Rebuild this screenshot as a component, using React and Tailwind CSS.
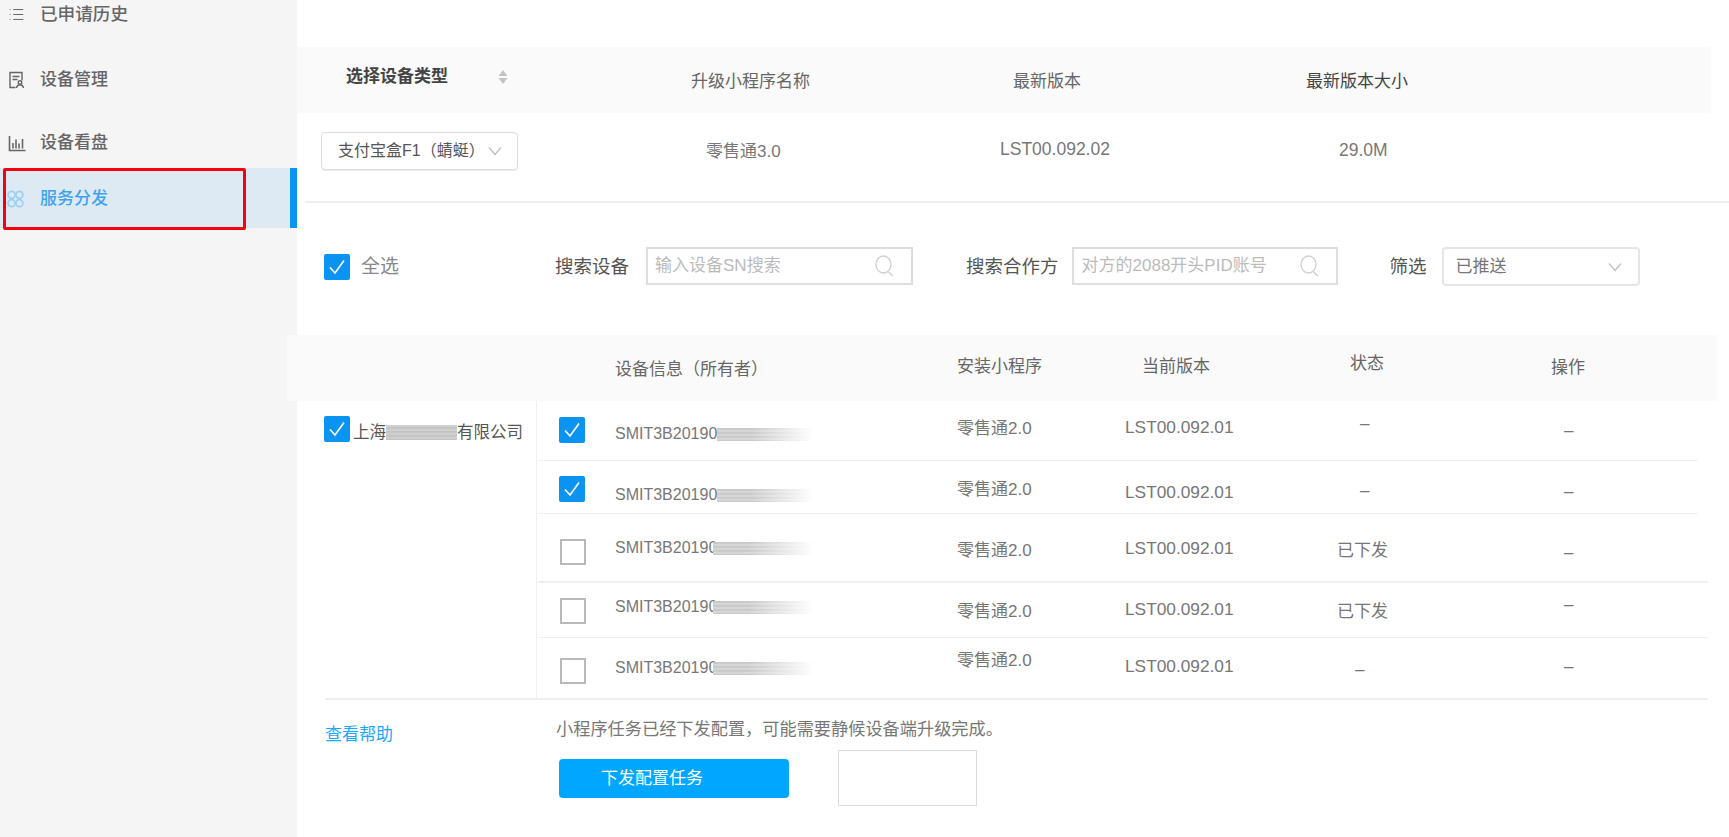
import React from "react";
import { List } from "lucide-react";

const Check = ({ on, cls = "" }) =>
  on ? (
    <span className={`flex h-[26px] w-[26px] shrink-0 items-center justify-center rounded-[2px] bg-[#0a93f0] ${cls}`}>
      <svg width="20" height="20" viewBox="0 0 20 20" fill="none" stroke="#fff" strokeWidth="1.6"><path d="M3 10.5 8 16 17 3.5" /></svg>
    </span>
  ) : (
    <span className={`block h-[26px] w-[26px] shrink-0 border-2 border-[#b9b9b9] bg-white ${cls}`} />
  );

const Chevron = ({ cls = "" }) => (
  <svg className={cls} width="14" height="10" viewBox="0 0 14 10" fill="none" stroke="#bdbdbd" strokeWidth="1.2"><path d="M1 1.5 7 8.5 13 1.5" /></svg>
);

const SearchIcon = ({ cls = "" }) => (
  <svg className={cls} width="20" height="22" viewBox="0 0 20 22" fill="none" stroke="#cfcfcf" strokeWidth="1.3">
    <ellipse cx="8.5" cy="9.5" rx="7.5" ry="8.5" />
    <path d="M13.5 17 18 21" />
  </svg>
);

const rows = [
  { h: "h-[60px] border-b border-[#efefef] mr-[10px]", on: true, c: "mt-[16px]", sn: "mt-[21px]", app: "mt-[16px]", ver: "mt-[14px]", st: "mt-[11px] pl-[23px]", status: "–", op: "mt-[18px]" },
  { h: "h-[53px] border-b border-[#efefef] mr-[10px]", on: true, c: "mt-[15px]", sn: "mt-[22px]", app: "mt-[17px]", ver: "mt-[19px]", st: "mt-[18px] pl-[23px]", status: "–", op: "mt-[19px]" },
  { h: "h-[69px] border-b-2 border-[#f0f0f0]", on: false, c: "mt-[25px]", sn: "mt-[22px]", app: "mt-[25px]", ver: "mt-[22px]", st: "mt-[25px]", status: "已下发", op: "mt-[27px]" },
  { h: "h-[55px] border-b border-[#efefef]", on: false, c: "mt-[15px]", sn: "mt-[12px]", app: "mt-[17px]", ver: "mt-[14px]", st: "mt-[17px]", status: "已下发", op: "mt-[10px]" },
  { h: "h-[61px]", on: false, c: "mt-[20px]", sn: "mt-[18px]", app: "mt-[11px]", ver: "mt-[16px]", st: "mt-[20px] pl-[18px]", status: "–", op: "mt-[17px]" },
];

function Nav({ icon, label, cls }) {
  return (
    <div className={`flex items-center pl-[8px] text-[17px] font-medium text-[#666] ${cls}`}>
      <span className="flex w-[32px] shrink-0 items-center">{icon}</span>
      <span>{label}</span>
    </div>
  );
}

export default function App() {
  return (
    <div
      className="flex h-[837px] w-[1729px] overflow-hidden bg-white text-[17px] leading-[24px] text-[#777]"
      style={{ fontFamily: '"Liberation Sans","Noto Sans CJK SC",sans-serif' }}
    >
      <aside className="w-[297px] shrink-0 bg-[#f5f5f5] leading-[24px]">
        <Nav
          cls="h-[28px]"
          label={<span className="text-[17.6px]">已申请历史</span>}
          icon={<List size={17} strokeWidth={1.4} color="#666" />}
        />
        <Nav
          cls="mt-[32px] h-[40px]"
          label="设备管理"
          icon={
            <svg width="17" height="18" viewBox="0 0 17 18" fill="none" stroke="#666" strokeWidth="1.4">
              <path d="M7.5 16.5H2V1.5h12v8" />
              <path d="M4.5 5.5h7M4.5 8.5h5" />
              <circle cx="12" cy="11.5" r="1.8" />
              <path d="M8.5 17c.3-2 1.7-3.2 3.5-3.2s3.2 1.2 3.5 3.2" />
            </svg>
          }
        />
        <Nav
          cls="mt-[23px] h-[40px]"
          label="设备看盘"
          icon={
            <svg width="18" height="17" viewBox="0 0 18 17" fill="none" stroke="#666" strokeWidth="1.6">
              <path d="M1.5 1v14.5H17.5" />
              <path d="M5 8v5.5M8 4.5v9M11 8.5v5M14.5 4v9.5" />
            </svg>
          }
        />
        <div className="relative mt-[5px] flex h-[60px] items-center bg-[#deeaf3] pl-[7px] pt-[2px] text-[17px] font-medium text-[#3ea3ef]">
          <span className="flex w-[33px] shrink-0 items-center">
            <svg width="17" height="18" viewBox="0 0 17 18" fill="none" stroke="#9ccff6" strokeWidth="1.7">
              <circle cx="4.6" cy="4.8" r="3.5" />
              <circle cx="12.4" cy="4.8" r="3.5" />
              <circle cx="4.6" cy="13.2" r="3.5" />
              <circle cx="12.4" cy="13.2" r="3.5" />
            </svg>
          </span>
          <span>服务分发</span>
          <span className="absolute right-0 top-0 h-full w-[7px] bg-[#0a93f0]" />
          <span className="absolute left-[3px] top-0 h-[62px] w-[243px] rounded-[2px] border-[3px] border-[#f5000c]" />
        </div>
      </aside>

      <main className="min-w-0 flex-1">
        {/* device type band */}
        <div className="mt-[47px] flex h-[66px] w-[1414px] items-start bg-[#fafafa] pl-[49px]">
          <div className="mt-[18px] flex w-[345px] items-center font-semibold text-[#444]">
            <span>选择设备类型</span>
            <svg className="ml-[50px]" width="10" height="16" viewBox="0 0 10 16" fill="#c4c4c4">
              <path d="M5 1 9.5 7H.5zM5 15 .5 9h9z" />
            </svg>
          </div>
          <div className="mt-[23px] w-[322px] text-[#666]">升级小程序名称</div>
          <div className="mt-[23px] w-[293px] text-[#666]">最新版本</div>
          <div className="mt-[23px] text-[#444]">最新版本大小</div>
        </div>

        {/* device type row */}
        <div className="ml-[8px] flex h-[90px] items-start border-b-2 border-[#efefef]">
          <div className="w-[401px] pl-[16px]">
            <div className="mt-[19px] flex h-[38px] w-[197px] items-center rounded-[4px] border border-[#dcdcdc] pl-[16px] text-[16px] text-[#555] shadow-[0_1px_1px_#eee]">
              <span className="whitespace-nowrap">支付宝盒F1（蜻蜓）</span>
              <Chevron cls="ml-[3px]" />
            </div>
          </div>
          <div className="mt-[27px] w-[294px]">零售通3.0</div>
          <div className="mt-[24px] w-[339px] text-[17.5px]">LST00.092.02</div>
          <div className="mt-[25px] text-[17.5px]">29.0M</div>
        </div>

        {/* filters */}
        <div className="flex h-[132px] items-start pl-[27px] pt-[44px]">
          <div className="flex h-[39px] items-center">
            <Check on />
            <span className="ml-[11px] w-[38px] text-[19px] whitespace-nowrap text-[#888]">全选</span>
            <span className="ml-[156px] text-[18.5px] text-[#555]">搜索设备</span>
            <div className="ml-[17px] flex h-[38px] w-[267px] items-center justify-between self-start border-2 border-[#dedede] pl-[7px] pr-[16px] text-[17px] text-[#bbb]">
              <span>输入设备SN搜索</span>
              <SearchIcon />
            </div>
            <span className="ml-[53px] text-[18.5px] text-[#555]">搜索合作方</span>
            <div className="ml-[13px] flex h-[38px] w-[266px] items-center justify-between self-start border-2 border-[#dedede] pl-[8px] pr-[16px] text-[17px] text-[#bbb]">
              <span className="whitespace-nowrap">对方的2088开头PID账号</span>
              <SearchIcon />
            </div>
            <span className="ml-[52px] text-[18.5px] text-[#555]">筛选</span>
            <div className="ml-[15px] flex h-[39px] w-[198px] items-center justify-between rounded-[4px] border-2 border-[#e6e6e6] pl-[12px] pr-[16px] text-[#777]">
              <span>已推送</span>
              <Chevron />
            </div>
          </div>
        </div>

        {/* table head */}
        <div className="ml-[-10px] flex h-[66px] w-[1430px] items-start bg-[#fafafa] pl-[328px] text-[#666]">
          <div className="mt-[23px] w-[342px]">设备信息（所有者）</div>
          <div className="mt-[20px] w-[185px]">安装小程序</div>
          <div className="mt-[20px] w-[208px]">当前版本</div>
          <div className="mt-[17px] w-[201px]">状态</div>
          <div className="mt-[21px]">操作</div>
        </div>

        {/* table body */}
        <div className="ml-[28px] flex h-[299px] w-[1383px] border-b-2 border-[#efefef]">
          <div className="w-[211px] shrink-0">
            <div className="ml-[-1px] mt-[15px] flex items-start text-[16.5px] text-[#555]">
              <Check on />
              <span className="ml-[3px] mt-[4px] flex items-center">
                上海
                <span className="block h-[15px] w-[71px] bg-[repeating-linear-gradient(0deg,#bdbdbd_0px,#d6d6d6_2px,#c0c0c0_4px)]" />
                有限公司
              </span>
            </div>
          </div>
          <div className="flex-1 border-l border-[#efefef] pl-[1px]">
            {rows.map((r, i) => (
              <div key={i} className={`flex items-start ${r.h}`}>
                <div className={`w-[77px] shrink-0 ${r.on ? "pl-[21px]" : "pl-[22px]"}`}>
                  <Check on={r.on} cls={r.c} />
                </div>
                <div className={`flex w-[342px] shrink-0 items-center text-[16px] text-[#777] ${r.sn}`}>
                  <span className="whitespace-nowrap">SMIT3B20190</span>
                  <span className={`block h-[13px] bg-[linear-gradient(90deg,rgba(255,255,255,0)_35%,#ffffff),repeating-linear-gradient(0deg,#c2c2c2_0px,#dcdcdc_2px,#c6c6c6_4px)] ${i < 2 ? "w-[96px]" : "ml-[-4px] w-[100px]"}`} />
                </div>
                <div className={`w-[168px] shrink-0 ${r.app}`}>零售通2.0</div>
                <div className={`w-[212px] shrink-0 text-[17.3px] ${r.ver}`}>LST00.092.01</div>
                <div className={`w-[223px] shrink-0 ${r.st}`}>{r.status}</div>
                <div className={`pl-[4px] ${r.op}`}>–</div>
              </div>
            ))}
          </div>
        </div>

        {/* footer */}
        <div className="ml-[28px] flex">
          <a className="mt-[23px] w-[231px] shrink-0 text-[#1aa8ff]">查看帮助</a>
          <div>
            <div className="mt-[17px] whitespace-nowrap text-[17.2px] text-[#777]">小程序任务已经下发配置，可能需要静候设备端升级完成。</div>
            <div className="mt-[9px] flex items-start">
              <button className="ml-[3px] mt-[9px] flex h-[39px] w-[230px] items-center rounded-[4px] bg-[#00a6ff] pl-[42px] text-white">下发配置任务</button>
              <div className="ml-[49px] h-[56px] w-[139px] border border-[#dddddd]" />
            </div>
          </div>
        </div>
      </main>
    </div>
  );
}
